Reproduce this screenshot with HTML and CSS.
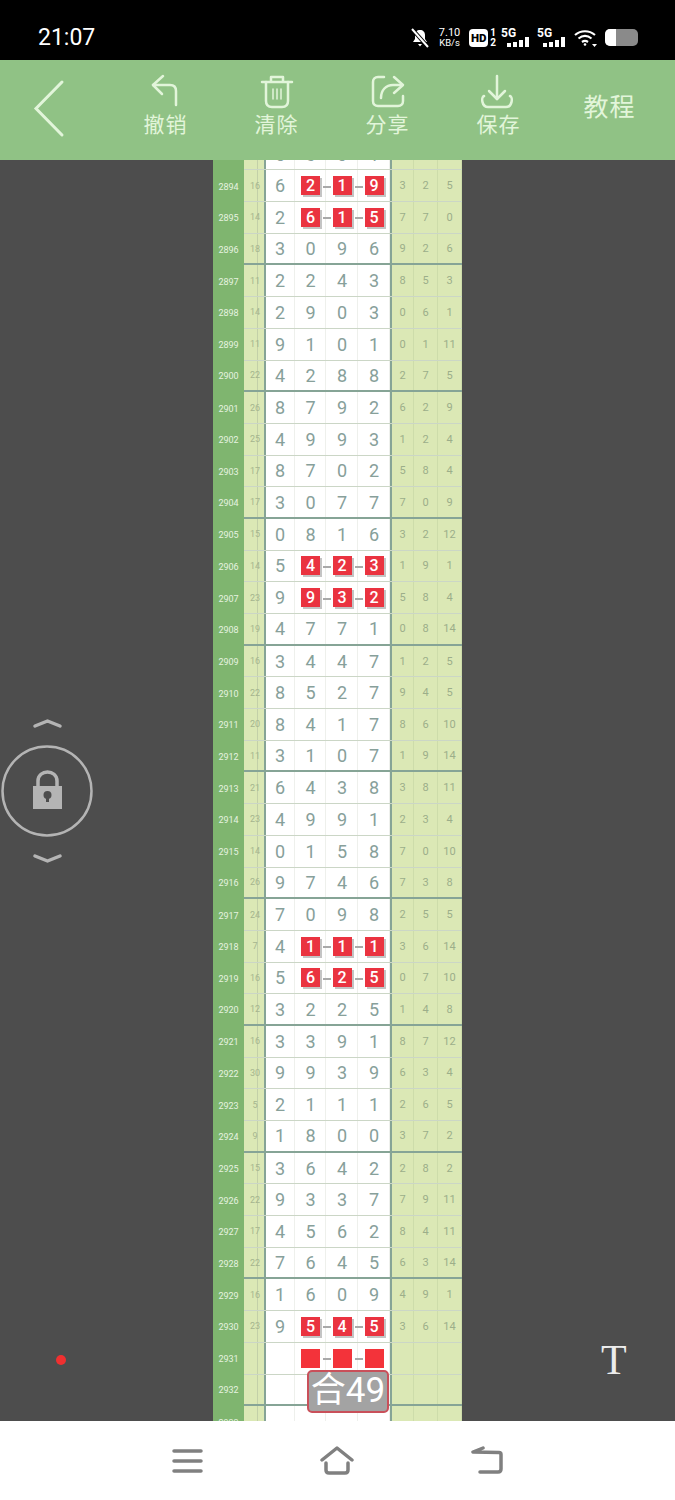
FILE: index.html
```html
<!DOCTYPE html>
<html lang="zh">
<head>
  <meta charset="UTF-8">
  <meta name="viewport" content="width=device-width, initial-scale=1.0">
  <link rel="stylesheet" href="styles.css">
  <title>教程</title>
</head>

<body>
<div class="screen">

  <!-- status bar -->
  <div class="status">
    <span class="time">21:07</span>
    <div class="status-icons">
      <svg class="ico-mute" width="20" height="20" viewBox="0 0 20 20">
        <path d="M10 2c-3 0-5 2-5 5v4l-2 3h14l-2-3V7c0-3-2-5-5-5z" fill="#fff"/>
        <path d="M8 16h4l-2 2.500z" fill="#fff"/>
        <path d="M2 1l16 18" stroke="#000" stroke-width="4"/>
        <path d="M2 1l16 18" stroke="#fff" stroke-width="2"/>
      </svg>
      <div class="speed"><span>7.10</span><span class="speed-unit">KB/s</span></div>
      <span class="hd">HD</span>
      <div class="sim"><span>1</span><span>2</span></div>
      <div class="net">
        <span>5G</span>
        <div class="bars"><i class="b1"></i><i class="b2"></i><i class="b3"></i><i class="b4"></i></div>
      </div>
      <div class="net">
        <span>5G</span>
        <div class="bars"><i class="b1"></i><i class="b2"></i><i class="b3"></i><i class="b4"></i></div>
      </div>
      <svg class="ico-wifi" width="24" height="18" viewBox="0 0 24 18" fill="none" stroke="#fff" stroke-width="2.200">
        <path d="M1 6c6-5 14-5 20 0"/>
        <path d="M4.500 9.500c4-3.200 9-3.200 13 0"/>
        <path d="M8 13c2-1.400 4-1.400 6 0"/>
        <circle cx="11" cy="15.500" r="1.300" fill="#fff" stroke="none"/>
        <path d="M18 15h5l-2.500 3z" fill="#fff" stroke="none"/>
      </svg>
      <div class="battery"><div class="battery-level"></div></div>
    </div>
  </div>

  <!-- toolbar -->
  <div class="toolbar">
    <div class="tool">
      <svg class="ico-back" width="40" height="64" viewBox="0 0 40 64" fill="none" stroke="#e2f5da" stroke-width="3" stroke-linecap="round">
        <path d="M29 3L3 29.500 29 56"/>
      </svg>
    </div>
    <div class="tool">
      <svg width="34" height="36" viewBox="0 0 34 36" fill="none" stroke="#e2f5da" stroke-width="2.500" stroke-linecap="round" stroke-linejoin="round">
        <path d="M14 2L4 11l9 9"/>
        <path d="M4 11h17c4 0 6 2 6 6v14"/>
      </svg>
      <span>撤销</span>
    </div>
    <div class="tool">
      <svg width="34" height="36" viewBox="0 0 34 36" fill="none" stroke="#e2f5da" stroke-width="2.500" stroke-linecap="round" stroke-linejoin="round">
        <path d="M2 8h30"/>
        <path d="M11 7V3h12v4"/>
        <path d="M6 8v19c0 4 2 6 6 6h10c4 0 6-2 6-6V8"/>
        <path d="M13 15v10M17 15v10M21 15v10" stroke-width="1.500"/>
      </svg>
      <span>清除</span>
    </div>
    <div class="tool">
      <svg width="34" height="36" viewBox="0 0 34 36" fill="none" stroke="#e2f5da" stroke-width="2.500" stroke-linecap="round" stroke-linejoin="round">
        <path d="M13 3H7C4 3 2 5 2 8v19c0 3 2 5 5 5h20c3 0 5-2 5-5v-5"/>
        <path d="M23 3l9 8-9 8"/>
        <path d="M31 11h-9c-7 0-12 5-12 13"/>
      </svg>
      <span>分享</span>
    </div>
    <div class="tool">
      <svg class="ico-save" width="34" height="36" viewBox="0 0 34 36" fill="none" stroke="#e2f5da" stroke-width="2.500" stroke-linecap="round" stroke-linejoin="round">
        <path d="M17 2v23"/>
        <path d="M9 17l8 8 8-8"/>
        <path d="M4 22c-3 1-2.500 11 4 11h18c6.500 0 7-10 4-11"/>
      </svg>
      <span>保存</span>
    </div>
    <div class="tool tool-text"><span>教程</span></div>
  </div>

  <!-- chart -->
  <div class="main">
    <div class="chart">
      <div class="row"><span class="id"></span><span class="sum"></span><span class="d first">5</span><span class="d">6</span><span class="d">0</span><span class="d">1</span><span class="r first"></span><span class="r"></span><span class="r"></span></div>
      <div class="row"><span class="id">2894</span><span class="sum">16</span><span class="d first">6</span><span class="d hit"><b>2</b></span><span class="d hit"><b>1</b></span><span class="d hit"><b>9</b></span><span class="r first">3</span><span class="r">2</span><span class="r">5</span></div>
      <div class="row"><span class="id">2895</span><span class="sum">14</span><span class="d first">2</span><span class="d hit"><b>6</b></span><span class="d hit"><b>1</b></span><span class="d hit"><b>5</b></span><span class="r first">7</span><span class="r">7</span><span class="r">0</span></div>
      <div class="row end"><span class="id">2896</span><span class="sum">18</span><span class="d first">3</span><span class="d">0</span><span class="d">9</span><span class="d">6</span><span class="r first">9</span><span class="r">2</span><span class="r">6</span></div>

      <div class="row"><span class="id">2897</span><span class="sum">11</span><span class="d first">2</span><span class="d">2</span><span class="d">4</span><span class="d">3</span><span class="r first">8</span><span class="r">5</span><span class="r">3</span></div>
      <div class="row"><span class="id">2898</span><span class="sum">14</span><span class="d first">2</span><span class="d">9</span><span class="d">0</span><span class="d">3</span><span class="r first">0</span><span class="r">6</span><span class="r">1</span></div>
      <div class="row"><span class="id">2899</span><span class="sum">11</span><span class="d first">9</span><span class="d">1</span><span class="d">0</span><span class="d">1</span><span class="r first">0</span><span class="r">1</span><span class="r">11</span></div>
      <div class="row end"><span class="id">2900</span><span class="sum">22</span><span class="d first">4</span><span class="d">2</span><span class="d">8</span><span class="d">8</span><span class="r first">2</span><span class="r">7</span><span class="r">5</span></div>

      <div class="row"><span class="id">2901</span><span class="sum">26</span><span class="d first">8</span><span class="d">7</span><span class="d">9</span><span class="d">2</span><span class="r first">6</span><span class="r">2</span><span class="r">9</span></div>
      <div class="row"><span class="id">2902</span><span class="sum">25</span><span class="d first">4</span><span class="d">9</span><span class="d">9</span><span class="d">3</span><span class="r first">1</span><span class="r">2</span><span class="r">4</span></div>
      <div class="row"><span class="id">2903</span><span class="sum">17</span><span class="d first">8</span><span class="d">7</span><span class="d">0</span><span class="d">2</span><span class="r first">5</span><span class="r">8</span><span class="r">4</span></div>
      <div class="row end"><span class="id">2904</span><span class="sum">17</span><span class="d first">3</span><span class="d">0</span><span class="d">7</span><span class="d">7</span><span class="r first">7</span><span class="r">0</span><span class="r">9</span></div>

      <div class="row"><span class="id">2905</span><span class="sum">15</span><span class="d first">0</span><span class="d">8</span><span class="d">1</span><span class="d">6</span><span class="r first">3</span><span class="r">2</span><span class="r">12</span></div>
      <div class="row"><span class="id">2906</span><span class="sum">14</span><span class="d first">5</span><span class="d hit"><b>4</b></span><span class="d hit"><b>2</b></span><span class="d hit"><b>3</b></span><span class="r first">1</span><span class="r">9</span><span class="r">1</span></div>
      <div class="row"><span class="id">2907</span><span class="sum">23</span><span class="d first">9</span><span class="d hit"><b>9</b></span><span class="d hit"><b>3</b></span><span class="d hit"><b>2</b></span><span class="r first">5</span><span class="r">8</span><span class="r">4</span></div>
      <div class="row end"><span class="id">2908</span><span class="sum">19</span><span class="d first">4</span><span class="d">7</span><span class="d">7</span><span class="d">1</span><span class="r first">0</span><span class="r">8</span><span class="r">14</span></div>

      <div class="row"><span class="id">2909</span><span class="sum">16</span><span class="d first">3</span><span class="d">4</span><span class="d">4</span><span class="d">7</span><span class="r first">1</span><span class="r">2</span><span class="r">5</span></div>
      <div class="row"><span class="id">2910</span><span class="sum">22</span><span class="d first">8</span><span class="d">5</span><span class="d">2</span><span class="d">7</span><span class="r first">9</span><span class="r">4</span><span class="r">5</span></div>
      <div class="row"><span class="id">2911</span><span class="sum">20</span><span class="d first">8</span><span class="d">4</span><span class="d">1</span><span class="d">7</span><span class="r first">8</span><span class="r">6</span><span class="r">10</span></div>
      <div class="row end"><span class="id">2912</span><span class="sum">11</span><span class="d first">3</span><span class="d">1</span><span class="d">0</span><span class="d">7</span><span class="r first">1</span><span class="r">9</span><span class="r">14</span></div>

      <div class="row"><span class="id">2913</span><span class="sum">21</span><span class="d first">6</span><span class="d">4</span><span class="d">3</span><span class="d">8</span><span class="r first">3</span><span class="r">8</span><span class="r">11</span></div>
      <div class="row"><span class="id">2914</span><span class="sum">23</span><span class="d first">4</span><span class="d">9</span><span class="d">9</span><span class="d">1</span><span class="r first">2</span><span class="r">3</span><span class="r">4</span></div>
      <div class="row"><span class="id">2915</span><span class="sum">14</span><span class="d first">0</span><span class="d">1</span><span class="d">5</span><span class="d">8</span><span class="r first">7</span><span class="r">0</span><span class="r">10</span></div>
      <div class="row end"><span class="id">2916</span><span class="sum">26</span><span class="d first">9</span><span class="d">7</span><span class="d">4</span><span class="d">6</span><span class="r first">7</span><span class="r">3</span><span class="r">8</span></div>

      <div class="row"><span class="id">2917</span><span class="sum">24</span><span class="d first">7</span><span class="d">0</span><span class="d">9</span><span class="d">8</span><span class="r first">2</span><span class="r">5</span><span class="r">5</span></div>
      <div class="row"><span class="id">2918</span><span class="sum">7</span><span class="d first">4</span><span class="d hit"><b>1</b></span><span class="d hit"><b>1</b></span><span class="d hit"><b>1</b></span><span class="r first">3</span><span class="r">6</span><span class="r">14</span></div>
      <div class="row"><span class="id">2919</span><span class="sum">16</span><span class="d first">5</span><span class="d hit"><b>6</b></span><span class="d hit"><b>2</b></span><span class="d hit"><b>5</b></span><span class="r first">0</span><span class="r">7</span><span class="r">10</span></div>
      <div class="row end"><span class="id">2920</span><span class="sum">12</span><span class="d first">3</span><span class="d">2</span><span class="d">2</span><span class="d">5</span><span class="r first">1</span><span class="r">4</span><span class="r">8</span></div>

      <div class="row"><span class="id">2921</span><span class="sum">16</span><span class="d first">3</span><span class="d">3</span><span class="d">9</span><span class="d">1</span><span class="r first">8</span><span class="r">7</span><span class="r">12</span></div>
      <div class="row"><span class="id">2922</span><span class="sum">30</span><span class="d first">9</span><span class="d">9</span><span class="d">3</span><span class="d">9</span><span class="r first">6</span><span class="r">3</span><span class="r">4</span></div>
      <div class="row"><span class="id">2923</span><span class="sum">5</span><span class="d first">2</span><span class="d">1</span><span class="d">1</span><span class="d">1</span><span class="r first">2</span><span class="r">6</span><span class="r">5</span></div>
      <div class="row end"><span class="id">2924</span><span class="sum">9</span><span class="d first">1</span><span class="d">8</span><span class="d">0</span><span class="d">0</span><span class="r first">3</span><span class="r">7</span><span class="r">2</span></div>

      <div class="row"><span class="id">2925</span><span class="sum">15</span><span class="d first">3</span><span class="d">6</span><span class="d">4</span><span class="d">2</span><span class="r first">2</span><span class="r">8</span><span class="r">2</span></div>
      <div class="row"><span class="id">2926</span><span class="sum">22</span><span class="d first">9</span><span class="d">3</span><span class="d">3</span><span class="d">7</span><span class="r first">7</span><span class="r">9</span><span class="r">11</span></div>
      <div class="row"><span class="id">2927</span><span class="sum">17</span><span class="d first">4</span><span class="d">5</span><span class="d">6</span><span class="d">2</span><span class="r first">8</span><span class="r">4</span><span class="r">11</span></div>
      <div class="row end"><span class="id">2928</span><span class="sum">22</span><span class="d first">7</span><span class="d">6</span><span class="d">4</span><span class="d">5</span><span class="r first">6</span><span class="r">3</span><span class="r">14</span></div>

      <div class="row"><span class="id">2929</span><span class="sum">16</span><span class="d first">1</span><span class="d">6</span><span class="d">0</span><span class="d">9</span><span class="r first">4</span><span class="r">9</span><span class="r">1</span></div>
      <div class="row"><span class="id">2930</span><span class="sum">23</span><span class="d first">9</span><span class="d hit"><b>5</b></span><span class="d hit"><b>4</b></span><span class="d hit"><b>5</b></span><span class="r first">3</span><span class="r">6</span><span class="r">14</span></div>
      <div class="row"><span class="id">2931</span><span class="sum"></span><span class="d first"></span><span class="d hit"><b class="blank"></b></span><span class="d hit"><b class="blank"></b></span><span class="d hit"><b class="blank"></b></span><span class="r first"></span><span class="r"></span><span class="r"></span></div>
      <div class="row end"><span class="id">2932</span><span class="sum"></span><span class="d first"></span><span class="d"></span><span class="d"></span><span class="d"></span><span class="r first"></span><span class="r"></span><span class="r"></span></div>

      <div class="row"><span class="id">2933</span><span class="sum"></span><span class="d first"></span><span class="d"></span><span class="d"></span><span class="d"></span><span class="r first"></span><span class="r"></span><span class="r"></span></div>
    </div>
  </div>

  <!-- bottom nav -->
  <div class="nav">
    <svg width="34" height="30" viewBox="0 0 34 30" fill="none" stroke="#808080" stroke-width="3.500" stroke-linecap="round">
      <path d="M3 5h27M3 15h27M3 25h27"/>
    </svg>
    <svg width="38" height="30" viewBox="0 0 38 30" fill="none" stroke="#808080" stroke-width="3.500" stroke-linecap="round" stroke-linejoin="round">
      <path d="M3 14L18 2l15 12"/>
      <path d="M7 17v7c0 2 1 3 3 3h16c2 0 3-1 3-3v-7"/>
    </svg>
    <svg width="34" height="30" viewBox="0 0 34 30" fill="none" stroke="#808080" stroke-width="3.500" stroke-linecap="round" stroke-linejoin="round">
      <path d="M13 2L3 6l26 .5c1.500 0 2 1 2 2V23c0 2-1 3-3 3H10"/>
    </svg>
  </div>

  <!-- floating stuff over the chart -->
  <div class="total">合49</div>

  <svg class="lock" width="95" height="155" viewBox="0 0 95 155" fill="none" stroke="#b4b4b4">
    <path d="M35 11l12.500-5L60 11" stroke-width="3.500" stroke-linecap="round" stroke-linejoin="round"/>
    <circle cx="47" cy="76" r="44.500" stroke-width="2.500"/>
    <path d="M38 71V66c0-12 19-12 19 0v5" stroke-width="3.500"/>
    <path d="M33 71h29v23H33z" fill="#b4b4b4" stroke="none"/>
    <circle cx="47.500" cy="80" r="4" fill="#4d4d4d" stroke="none"/>
    <path d="M46 80h3v7h-3z" fill="#4d4d4d" stroke="none"/>
    <path d="M35 141l12.500 5L60 141" stroke-width="3.500" stroke-linecap="round" stroke-linejoin="round"/>
  </svg>

  <div class="dot"></div>
  <div class="font-btn">T</div>

</div>
</body>
</html>
```

FILE: styles.css
```css
body {
  margin: 0;
  padding: 0;
  font-family: Roboto, "Noto Sans CJK SC", sans-serif;
}

.screen {
  position: relative;
  display: flex;
  flex-direction: column;
  width: 675px;
  height: 1500px;
  overflow: hidden;
  background: #4d4d4d;
}

/* status bar */
.status {
  display: flex;
  align-items: center;
  justify-content: space-between;
  height: 60px;
  padding: 15px 37px 0 38px;
  box-sizing: border-box;
  background: #000;
  color: #fff;
}

.time {
  font-size: 23px;
  font-weight: 400;
  line-height: 44px;
}

.status-icons {
  display: flex;
  align-items: center;
}

.speed {
  display: flex;
  flex-direction: column;
  align-items: center;
  margin-left: 9px;
  font-size: 11px;
  line-height: 11px;
}

.speed-unit {
  font-size: 9.500px;
  line-height: 10px;
}

.hd {
  width: 19px;
  height: 18px;
  margin-left: 9px;
  border-radius: 4px;
  background: #fff;
  color: #000;
  font-size: 11.500px;
  font-weight: 900;
  line-height: 18px;
  text-align: center;
}

.sim {
  display: flex;
  flex-direction: column;
  margin-left: 2px;
  font-size: 10px;
  font-weight: 700;
  line-height: 10px;
}

.net {
  display: flex;
  flex-direction: column;
  width: 28px;
  margin-left: 5px;
  font-size: 12px;
  font-weight: 700;
  line-height: 10px;
}

.bars {
  display: flex;
  align-items: flex-end;
  justify-content: flex-end;
  gap: 2px;
  height: 10px;
  margin-top: -1px;
}

.bars i {
  width: 4px;
  background: #fff;
}

.b1 { height: 4px; }
.b2 { height: 5px; }
.b3 { height: 7px; }
.b4 { height: 10px; }

.net + .net {
  margin-left: 8px;
}

.ico-wifi {
  margin-left: 9px;
}

.battery {
  width: 33px;
  height: 17px;
  margin-left: 7px;
  border-radius: 5px;
  background: #8a8a8a;
  overflow: hidden;
}

.battery-level {
  width: 11px;
  height: 100%;
  background: #fff;
}

/* toolbar */
.toolbar {
  display: grid;
  grid-template-columns: 110px repeat(5, 111px);
  flex-shrink: 0;
  height: 100px;
  background: #90c285;
  color: #e2f5da;
}

.tool {
  display: flex;
  flex-direction: column;
  align-items: center;
  padding-top: 14px;
  font-size: 21px;
  line-height: 30px;
  letter-spacing: 1px;
}

.tool svg {
  display: block;
  flex-shrink: 0;
}

.ico-back {
  margin: 5px 0 0 -4px;
}

.ico-save {
  margin-left: -3px;
}

.tool-text {
  justify-content: center;
  padding: 0 0 5px;
  font-size: 25px;
}

/* chart */
.main {
  flex: 1;
  min-height: 0;
  overflow: hidden;
}

.chart {
  width: 249px;
  margin: -21.300px auto 0;
  background: #fff;
}

.row {
  display: grid;
  grid-template-columns: 31px 20px 31px 31px 32px 32px 24px 24px 24px;
  height: 31.700px;
  box-sizing: border-box;
  border-bottom: 1px solid #cbd6c6;
}

.row span {
  display: flex;
  align-items: center;
  justify-content: center;
  box-sizing: border-box;
}

.row.end {
  border-bottom: 2px solid #86a496;
}

.id {
  margin-bottom: -2px;
  background: #7fb56f;
  color: #e6f3e0;
  font-size: 9px;
}

.sum {
  background: linear-gradient(#c3d0a8, #c3d0a8) 13px 0 / 1px 100% no-repeat, #dbe8b5;
  color: #a5b58e;
  font-size: 9px;
  padding-left: 2px;
}

.d {
  position: relative;
  border-right: 1px solid #eef0ec;
  color: #87a09a;
  font-size: 18px;
}

.row .d + .d {
  padding-left: 1px;
}

.d.first,
.r.first {
  border-left: 2px solid #86a496;
}

.r {
  border-right: 1px solid #cddcaa;
  background: #dbe8b5;
  color: #9cae8a;
  font-size: 11px;
}

.hit b {
  display: block;
  width: 19px;
  height: 19px;
  background: #ea3340;
  box-shadow: 2px 2px 0 #c4c4c4;
  color: #fff;
  font-size: 16px;
  font-weight: 500;
  line-height: 19px;
  text-align: center;
}

.hit b.blank {
  background: #f3333a;
  box-shadow: none;
}

.hit + .hit::before {
  content: "";
  position: absolute;
  left: -3px;
  top: 50%;
  width: 8px;
  height: 2px;
  background: #a9a9a9;
}

/* bottom nav */
.nav {
  display: flex;
  justify-content: space-between;
  flex-shrink: 0;
  height: 79px;
  padding: 25px 171px 0 171px;
  box-sizing: border-box;
  background: #fff;
}

/* overlays */
.total {
  position: absolute;
  left: 307px;
  top: 1370px;
  width: 82px;
  height: 43px;
  box-sizing: border-box;
  border: 2px solid #c9505a;
  border-radius: 5px;
  background: #a3a3a3;
  color: #fff;
  font-size: 35px;
  line-height: 38px;
  text-align: center;
  white-space: nowrap;
}

.lock {
  position: absolute;
  left: 0;
  top: 715px;
}

.dot {
  position: absolute;
  left: 56px;
  top: 1355px;
  width: 10px;
  height: 10px;
  border-radius: 50%;
  background: #f03030;
}

.font-btn {
  position: absolute;
  left: 601px;
  top: 1336px;
  color: #ececec;
  font-family: "Liberation Serif", serif;
  font-size: 42px;
  line-height: 48px;
}
```
